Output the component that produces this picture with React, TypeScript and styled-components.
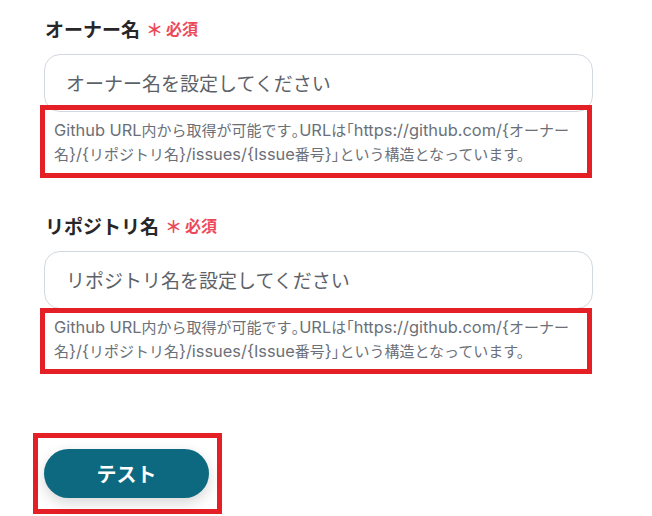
import React from 'react';
import styled, { createGlobalStyle } from 'styled-components';

const GlobalStyle = createGlobalStyle`
  body {
    margin: 0;
    background: #ffffff;
    font-family: Inter, 'Noto Sans CJK JP', sans-serif;
  }
`;

const Page = styled.div`
  width: 652px;
  height: 516px;
  box-sizing: border-box;
  padding: 16px 59px 0 44px;
  overflow: hidden;
`;

const Field = styled.div<{ $gap: number }>`
  display: flex;
  flex-direction: column;
  margin-bottom: ${(p) => p.$gap}px;
`;

const Label = styled.div`
  display: flex;
  align-items: center;
  height: 24px;
  margin-bottom: 14px;
  padding-left: 1px;
  font-size: 19px;
  font-weight: 700;
  color: #27272a;
`;

const Required = styled.span`
  display: inline-flex;
  align-items: center;
  margin-left: 6px;
  font-size: 16px;
  font-weight: 700;
  color: #ec4a5b;
`;

const Star = styled.span`
  font-size: 17px;
  margin-right: 3px;
  line-height: 1;
  transform: translateY(2px);
`;

const Input = styled.input`
  box-sizing: border-box;
  width: 549px;
  height: 58px;
  padding: 3px 21px 0;
  border: 1px solid #d2d8df;
  border-radius: 16px;
  font-family: Inter, 'Noto Sans CJK JP', sans-serif;
  font-size: 19px;
  color: #333;
  outline: none;

  &::placeholder {
    color: #5d6269;
  }
`;

const Hint = styled.p<{ $top: number; $bottom: number }>`
  position: relative;
  margin: 7px 0 0;
  padding: 0 8px 0 10px;
  width: 549px;
  height: 48px;
  box-sizing: border-box;
  font-size: 15px;
  line-height: 24px;
  color: #6b7078;

  &::after {
    content: '';
    position: absolute;
    left: -4px;
    right: 1px;
    top: -${(p) => p.$top}px;
    bottom: -${(p) => p.$bottom}px;
    border: 5px solid #e41f25;
    pointer-events: none;
  }
`;

const Latin = styled.span`
  font-size: 16.4px;
  line-height: 1;
`;

const Punct = styled.span`
  font-feature-settings: 'halt';
`;

const ButtonFrame = styled.div`
  width: 189px;
  height: 81px;
  box-sizing: border-box;
  margin-left: -11px;
  padding: 11px 8px 0 6px;
  border: 5px solid #e41f25;
`;

const TestButton = styled.button`
  width: 165px;
  height: 49px;
  border: none;
  border-radius: 25px;
  background: #0c6980;
  color: #ffffff;
  font-family: 'Noto Sans CJK JP', sans-serif;
  font-size: 20px;
  font-weight: 700;
  box-shadow: 0 5px 14px rgba(0, 0, 0, 0.16);
  cursor: pointer;
`;

const HintText = () => (
  <>
    <Latin>Github URL</Latin>内から取得が可能です<Punct>。</Punct>
    <Latin>URL</Latin>は<Punct>「</Punct>
    <Latin>https://github.com/{'{'}</Latin>オーナー名<Latin>{'}/{'}</Latin>リポジトリ名
    <Latin>{'}/issues/{Issue'}</Latin>番号<Latin>{'}'}</Latin>
    <Punct>」</Punct>という構造となっています。
  </>
);

const fields = [
  { label: 'オーナー名', placeholder: 'オーナー名を設定してください', top: 14, bottom: 11, gap: 46 },
  { label: 'リポジトリ名', placeholder: 'リポジトリ名を設定してください', top: 8, bottom: 10, gap: 69 },
];

const App = () => {
  return (
    <>
      <GlobalStyle />
      <Page>
        {fields.map((f) => (
          <Field key={f.label} $gap={f.gap}>
            <Label>
              {f.label}
              <Required>
                <Star>＊</Star>必須
              </Required>
            </Label>
            <Input placeholder={f.placeholder} />
            <Hint $top={f.top} $bottom={f.bottom}>
              <HintText />
            </Hint>
          </Field>
        ))}
        <ButtonFrame>
          <TestButton>テスト</TestButton>
        </ButtonFrame>
      </Page>
    </>
  );
};

export default App;
